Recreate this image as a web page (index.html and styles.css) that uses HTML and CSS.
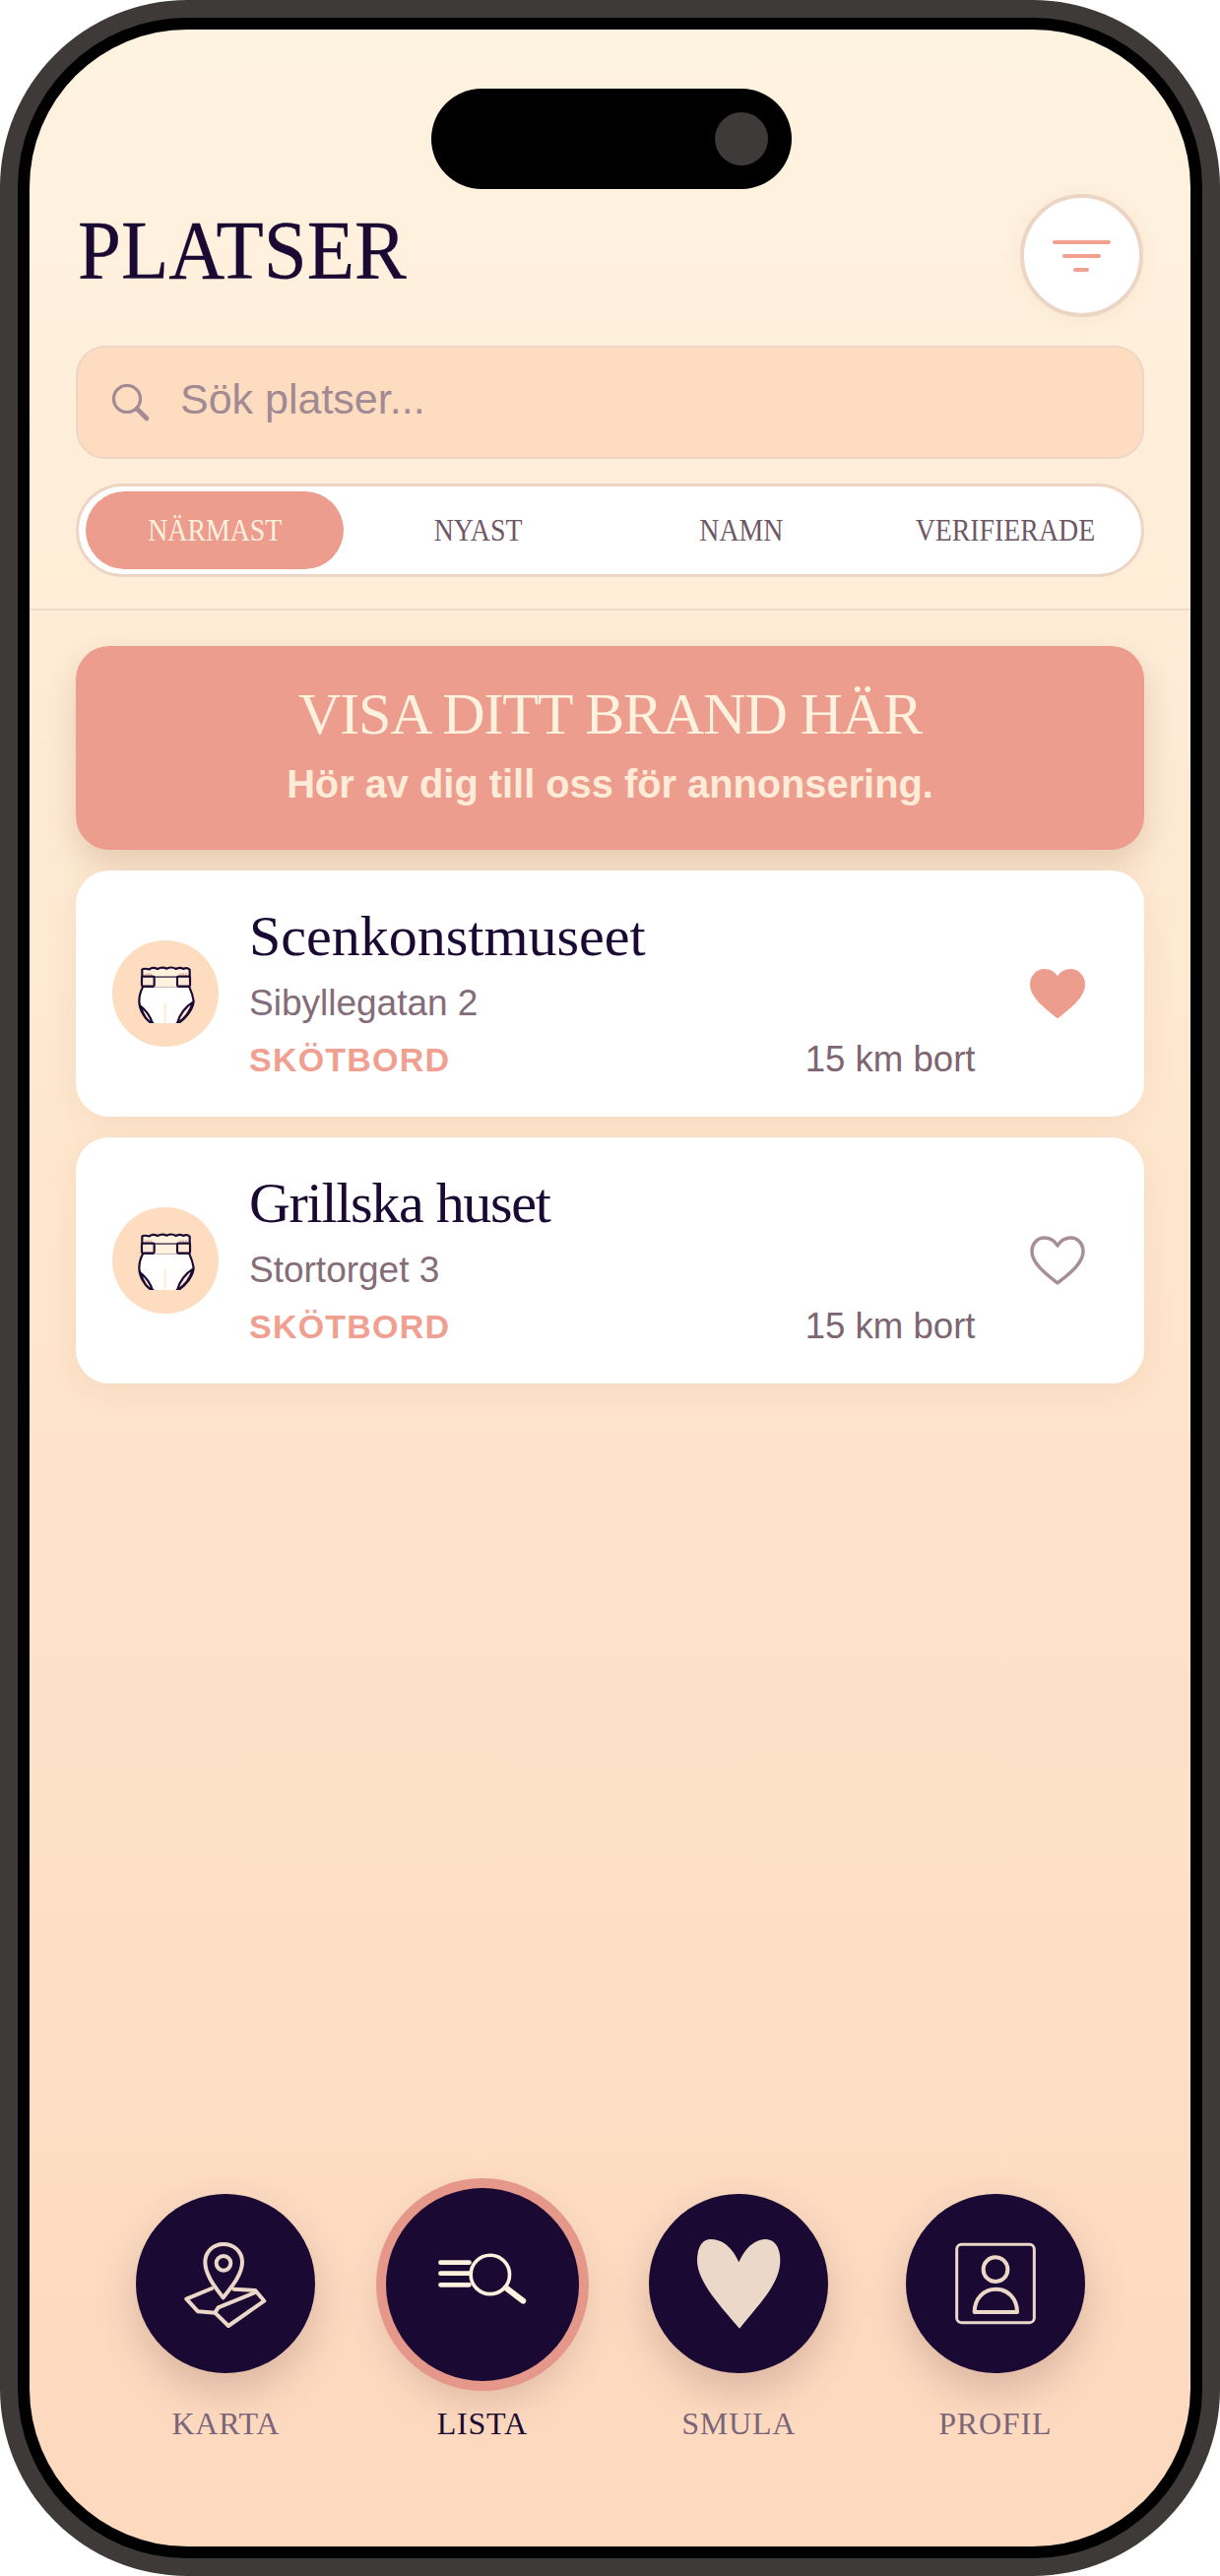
FILE: index.html
```html
<!DOCTYPE html>
<html lang="sv">
<head>
<meta charset="utf-8">
<title>Platser</title>
<link rel="stylesheet" href="styles.css">
</head>
<body>
<div class="phone">
  <div class="bezel">
    <main class="screen">
      <div class="island"><span class="camera"></span></div>
      <header class="header">
        <div class="title-row">
          <h1 class="title">PLATSER</h1>
          <button class="filter" aria-label="Filter">
            <span class="fl fl-a"></span><span class="fl fl-b"></span><span class="fl fl-c"></span>
          </button>
        </div>
        <div class="search">
          <svg class="search-icon" viewBox="0 0 40 40"><circle cx="16" cy="15" r="13.500" fill="none" stroke="#a18a94" stroke-width="3.200"/><path d="M26 25l10 10" stroke="#a18a94" stroke-width="4.600" stroke-linecap="round"/></svg>
          <span class="placeholder">Sök platser...</span>
        </div>
        <div class="tabs">
          <div class="tab active"><span class="tab-text">NÄRMAST</span></div>
          <div class="tab"><span class="tab-text">NYAST</span></div>
          <div class="tab"><span class="tab-text">NAMN</span></div>
          <div class="tab"><span class="tab-text">VERIFIERADE</span></div>
        </div>
      </header>
      <section class="content">
        <div class="banner">
          <div class="banner-title">VISA DITT BRAND HÄR</div>
          <div class="banner-sub">Hör av dig till oss för annonsering.</div>
        </div>
        <article class="card">
          <div class="badge">
            <svg class="diaper" viewBox="0 0 180 180"><use href="#diaper"/></svg>
          </div>
          <div class="info">
            <h2 class="name">Scenkonstmuseet</h2>
            <div class="addr">Sibyllegatan 2</div>
            <div class="meta"><span class="tag">SKÖTBORD</span><span class="dist">15 km bort</span></div>
          </div>
          <svg class="heart" viewBox="0 0 56 50"><path class="heart-on" d="M28 9C25 4 20 1 14.500 1 7 1 1 7.500 1 16 1 29 18 41 28 49 38 41 55 29 55 16 55 7.500 49 1 41.500 1 36 1 31 4 28 9Z"/></svg>
        </article>
        <article class="card">
          <div class="badge">
            <svg class="diaper" viewBox="0 0 180 180"><use href="#diaper"/></svg>
          </div>
          <div class="info">
            <h2 class="name name-tight">Grillska huset</h2>
            <div class="addr">Stortorget 3</div>
            <div class="meta"><span class="tag">SKÖTBORD</span><span class="dist">15 km bort</span></div>
          </div>
          <svg class="heart" viewBox="0 0 56 50"><path class="heart-off" d="M28 10C25 5 20 2 14.500 2 7.500 2 2 8 2 16 2 28.500 18 40 28 48 38 40 54 28.500 54 16 54 8 48.500 2 41.500 2 36 2 31 5 28 10Z"/></svg>
        </article>
      </section>
      <nav class="nav">
        <div class="nav-item">
          <div class="nav-btn">
            <svg class="nav-icon" viewBox="114 142 546 546"><g fill="none" stroke="#ecd8c8" stroke-width="12" stroke-linejoin="round" stroke-linecap="round"><path d="M380 458C350 420 325 385 325 350 325 318 350 295 381 295 413 295 438 318 438 350 438 385 410 420 380 458Z"/><circle cx="381" cy="353" r="22"/><path d="M345 430L268 462 303 500 355 504 396 544 505 468 478 436 412 432"/><path d="M355 504L365 488 478 442"/></g></svg>
          </div>
          <span class="nav-label">KARTA</span>
        </div>
        <div class="nav-item">
          <div class="nav-btn current">
            <svg class="nav-icon" viewBox="875 122 587 586"><g fill="none" stroke="#fef2df" stroke-linecap="round"><path d="M1041 348H1128M1041 381H1128M1041 416H1128" stroke-width="14"/><circle cx="1192" cy="385" r="59" stroke-width="11"/><path d="M1240 425L1292 465" stroke-width="18"/></g></svg>
          </div>
          <span class="nav-label on">LISTA</span>
        </div>
        <div class="nav-item">
          <div class="nav-btn">
            <svg class="nav-icon" viewBox="116 142 546 546"><path fill="#ecd8c8" d="M390 350C370 305 340 280 305 280 275 280 263 310 263 345 263 410 340 490 392 552 440 490 516 420 516 345 516 305 500 280 470 280 440 280 410 305 390 350Z"/></svg>
          </div>
          <span class="nav-label">SMULA</span>
        </div>
        <div class="nav-item">
          <div class="nav-btn">
            <svg class="nav-icon" viewBox="897 142 546 546"><g fill="none" stroke="#ecd8c8" stroke-linejoin="round"><rect x="1052" y="296" width="236" height="238" rx="14" stroke-width="9"/><circle cx="1170" cy="372" r="37" stroke-width="12"/><path d="M1106 502C1106 460 1135 432 1171 432 1207 432 1236 460 1236 502Z" stroke-width="12"/></g></svg>
          </div>
          <span class="nav-label">PROFIL</span>
        </div>
      </nav>
    </main>
  </div>
</div>
<svg class="defs" width="0" height="0" aria-hidden="true">
  <symbol id="diaper" viewBox="114 87 180 180">
    <path d="M133 128V104C140 98 147 103 155 103 162 97 172 98 180 102 190 96 200 97 208 101 218 96 228 97 236 102 244 98 252 97 258 102 265 98 272 98 278 104V128Z" fill="#fef2df" stroke="#1a0933" stroke-width="6.500" stroke-linejoin="round"/>
    <path d="M136 155C128 170 124 185 124 200 124 225 140 255 165 268 185 276 225 276 245 266 268 250 288 225 290 200 288 185 282 168 276 155Z" fill="#fff" stroke="#1a0933" stroke-width="6.500" stroke-linejoin="round"/>
    <path d="M168 128H242V158H168Z" fill="#fef2df"/>
    <path d="M142 118H162M248 118H270" stroke="#f2a08f" stroke-width="5" stroke-dasharray="5 3"/>
    <rect x="132" y="125" width="38" height="30" rx="4" fill="#fde8d4" stroke="#1a0933" stroke-width="6.500"/>
    <rect x="240" y="125" width="39" height="30" rx="4" fill="#fde8d4" stroke="#1a0933" stroke-width="6.500"/>
    <path d="M128 215C142 226 158 248 165 268 148 262 135 240 128 215Z" fill="#fde8d4" stroke="#1a0933" stroke-width="6.500" stroke-linejoin="round"/>
    <path d="M288 203C268 215 246 240 240 268 262 255 280 230 288 203Z" fill="#fde8d4" stroke="#1a0933" stroke-width="6.500" stroke-linejoin="round"/>
    <path d="M203 205V270" stroke="#fff0dc" stroke-width="8"/>
  </symbol>
</svg>
</body>
</html>
```
FILE: styles.css
```css
* { box-sizing: border-box; }
html, body { margin: 0; padding: 0; background: #fff; }
body { width: 1239px; height: 2616px; overflow: hidden; }
h1, h2 { margin: 0; font-weight: 400; }
.defs { position: absolute; }

.phone { width: 1239px; height: 2616px; padding: 18px; background: #3e3a3a; border-radius: 190px; }
.bezel { width: 100%; height: 100%; padding: 12px; background: #000; border-radius: 172px; }
.screen {
  position: relative;
  width: 100%; height: 100%;
  display: flex; flex-direction: column;
  border-radius: 160px;
  overflow: hidden;
  background: linear-gradient(180deg, #fef3e0 0%, #fee5cc 50%, #fdd9be 100%);
}
.island {
  position: absolute; left: 408px; top: 60px;
  width: 366px; height: 102px;
  background: #000; border-radius: 51px;
}
.camera {
  position: absolute; left: 288px; top: 24px;
  width: 54px; height: 54px;
  background: #3e3a3a; border-radius: 50%;
}

.header { padding: 167px 47px 0; border-bottom: 2px solid #f1dac9; height: 590px; }
.title-row { display: flex; justify-content: space-between; align-items: center; height: 125px; margin-bottom: 29px; padding-left: 2px; padding-right: 1.500px; }
.title {
  font: 400 85px/1 "Liberation Serif", serif;
  color: #1a0933;
  margin-top: -10px;
  transform: scaleX(.93);
  transform-origin: left center;
  -webkit-text-stroke: .3px #1a0933;
}
.filter {
  width: 125px; height: 125px; padding: 0;
  display: flex; flex-direction: column; align-items: center; justify-content: center; gap: 10px;
  background: #fff; border: 4px solid #ecd5c5; border-radius: 50%;
  box-shadow: 0 2px 20px rgba(190, 130, 100, .07);
}
.fl { display: block; height: 4px; border-radius: 2px; background: #f2a08f; }
.fl-a { width: 59px; }
.fl-b { width: 39px; }
.fl-c { width: 16px; }

.search {
  display: flex; align-items: center;
  height: 115px; padding-left: 34px;
  background: #fddcc0; border: 2px solid #eed6c5; border-radius: 30px;
}
.search-icon { width: 40px; height: 40px; margin-right: 30px; margin-top: 2px; }
.placeholder { font: 400 43px/1 "Liberation Sans", sans-serif; color: #a18a94; margin-top: -6px; }

.tabs {
  display: grid; grid-template-columns: repeat(4, 1fr); gap: 6px;
  height: 95px; margin-top: 25px; padding: 5px 7px;
  background: #fff; border: 3px solid #ecd5c5; border-radius: 48px;
}
.tab {
  display: flex; align-items: center; justify-content: center;
  font: 400 32px/1 "Liberation Serif", serif;
  color: #6f5866; border-radius: 40px;
}
.tab-text { display: inline-block; transform: scaleX(.87); white-space: nowrap; margin-top: -2px; }
.tab.active { background: #ed9d8e; color: #fef2df; }

.content { padding: 36px 47px 0; display: flex; flex-direction: column; gap: 21px; }
.banner {
  height: 207px; padding-top: 39px;
  background: #ed9d8e; border-radius: 34px;
  text-align: center;
  box-shadow: 0 14px 32px rgba(130, 80, 50, .2);
}
.banner-title { font: 400 60px/1 "Liberation Serif", serif; letter-spacing: -1.100px; color: #fef2df; }
.banner-sub { font: 700 39.800px/1 "Liberation Sans", sans-serif; color: #feecd8; margin-top: 22px; }
.card {
  height: 250px; padding: 0 60px 0 37px;
  display: flex; align-items: center;
  background: #fff; border-radius: 34px;
  box-shadow: 0 6px 30px rgba(190, 130, 100, .12);
}
.badge {
  flex: none; width: 108px; height: 108px; margin-right: 31px;
  display: flex; align-items: center; justify-content: center;
  background: #fddcc0; border-radius: 50%;
}
.diaper { width: 60px; height: 60px; }
.info { flex: 1; min-width: 0; margin-bottom: 2px; }
.name { font: 400 58px/1 "Liberation Serif", serif; color: #1a0933; margin-bottom: 20px; }
.name-tight { letter-spacing: -1.300px; }
.addr { font: 400 37px/1 "Liberation Sans", sans-serif; color: #846d78; margin-bottom: 21px; }
.meta { display: flex; justify-content: space-between; align-items: baseline; padding-right: 55.500px; }
.tag { font: 700 34px/1 "Liberation Sans", sans-serif; letter-spacing: 1.200px; color: #f0a090; }
.dist { font: 400 36.600px/1 "Liberation Sans", sans-serif; color: #7d6572; }
.heart { flex: none; width: 56px; height: 50px; margin-top: -1px; }
.heart-on { fill: #ed9d8e; stroke: #ed9d8e; stroke-width: 2; stroke-linejoin: round; }
.heart-off { fill: none; stroke: #a68f95; stroke-width: 3.500; stroke-linejoin: round; }

.nav {
  margin-top: auto; padding: 0 68px 0 69px;
  display: grid; grid-template-columns: repeat(4, 1fr);
  height: 275px; margin-bottom: 99px;
}
.nav-item { display: flex; flex-direction: column; align-items: center; }
.nav-btn {
  width: 182px; height: 182px; margin-top: 16px;
  border-radius: 50%; background: #1a0933;
  box-shadow: 0 18px 44px rgba(110, 60, 60, .24);
}
.nav-btn.current {
  width: 196px; height: 196px; margin-top: 10px; margin-bottom: -20px;
  box-shadow: 0 0 0 10px #e5988a, 0 18px 44px rgba(110, 60, 60, .24);
}
.nav-icon { display: block; width: 100%; height: 100%; }
.nav-label {
  margin-top: 35px;
  font: 400 32px/1 "Liberation Serif", serif; letter-spacing: .8px; color: #7b6579;
}
.nav-btn.current + .nav-label { margin-top: 47px; }
.nav-label.on { color: #1a0933; }
```
